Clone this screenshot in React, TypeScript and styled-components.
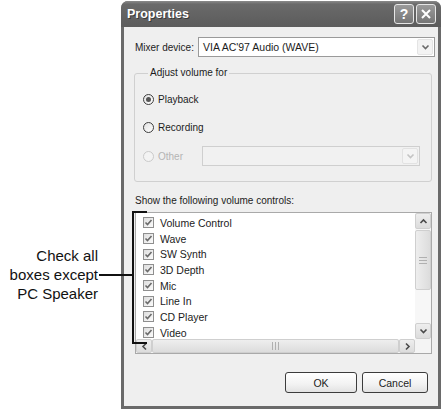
import React from "react";
import styled, { createGlobalStyle, css } from "styled-components";

const GlobalStyle = createGlobalStyle`
  html, body { margin: 0; padding: 0; background: #ffffff; }
  body { font-family: "Liberation Sans", Arial, sans-serif; }
  * { box-sizing: border-box; }
`;

const Page = styled.div`
  position: relative;
  width: 442px;
  height: 411px;
  display: flex;
  align-items: flex-start;
  overflow: hidden;
`;

const Callout = styled.div`
  width: 121px;
  flex: none;
  margin-top: 246px;
  padding-right: 23px;
  text-align: right;
  font-size: 15px;
  line-height: 19px;
  color: #111;
`;

const Leader = styled.div`
  position: absolute;
  left: 99px;
  top: 274px;
  width: 35px;
  height: 2px;
  background: #111;
`;

const Bracket = styled.div`
  position: absolute;
  left: 132px;
  top: 211px;
  width: 15px;
  height: 133px;
  border: 2px solid #111;
  border-right: none;
`;

const Window = styled.div`
  width: 320px;
  height: 408px;
  margin-top: 1px;
  flex: none;
  display: flex;
  flex-direction: column;
  background: #6a6a6a;
  border-radius: 7px 7px 0 0;
  padding: 0 3px 3px;
`;

const TitleBar = styled.div`
  height: 26px;
  display: flex;
  align-items: center;
  background: linear-gradient(#8a8a8a 0%, #6a6a6a 12%, #626262 60%, #5c5c5c 100%);
  margin: 0 -3px;
  padding-left: 6px;
  padding-right: 5px;
  border-radius: 7px 7px 0 0;
`;

const Title = styled.div`
  flex: 1;
  color: #fff;
  font-weight: bold;
  font-size: 12.5px;
  text-shadow: 1px 1px 0 #3a3a3a;
`;

const TitleButtons = styled.div`
  display: flex;
  gap: 2px;
`;

const CaptionButton = styled.div`
  width: 20px;
  height: 20px;
  border: 1px solid #e6e6e6;
  border-radius: 3px;
  background: linear-gradient(#9a9a9a, #767676);
  display: flex;
  align-items: center;
  justify-content: center;
  color: #fff;
  font-weight: bold;
  font-size: 14px;
`;

const Body = styled.div`
  flex: 1;
  background: #efefef;
  padding: 10px 6px 0 11px;
  display: flex;
  flex-direction: column;
  font-size: 10px;
  color: #1c1c1c;
`;

const MixerRow = styled.div`
  display: flex;
  align-items: center;
  height: 20px;
`;

const FieldLabel = styled.div<{ $w: number; $disabled?: boolean }>`
  width: ${(p) => p.$w}px;
  flex: none;
  color: ${(p) => (p.$disabled ? "#b4b4b4" : "#1c1c1c")};
`;

const Combo = styled.div<{ $disabled?: boolean; $w?: number }>`
  height: 20px;
  ${(p) => (p.$w ? css`width: ${p.$w}px;` : css`flex: 1; margin-right: -3px;`)}
  border: 1px solid ${(p) => (p.$disabled ? "#cfcfcf" : "#9a9a9a")};
  background: ${(p) => (p.$disabled ? "#f1f1f1" : "#ffffff")};
  display: flex;
  align-items: center;
  padding-left: 4px;
  padding-right: 1px;
`;

const ComboText = styled.div`
  flex: 1;
  font-size: 10.5px;
  color: #1c1c1c;
`;

const DropButton = styled.div<{ $disabled?: boolean }>`
  width: 16px;
  height: 16px;
  border: 1px solid ${(p) => (p.$disabled ? "#e2e2e2" : "#e4e4e4")};
  border-radius: 2px;
  background: ${(p) => (p.$disabled ? "#f4f4f4" : "#f3f3f3")};
  display: flex;
  align-items: center;
  justify-content: center;
`;

const GroupBox = styled.fieldset`
  margin: 10px 0 0 -1px;
  padding: 0 0 15px 8px;
  border: 1px solid #d0d0d0;
  border-radius: 3px;
  min-width: 0;
`;

const Legend = styled.legend`
  margin-left: 5px;
  padding: 0 2px;
  font-size: 10px;
  line-height: 12px;
  color: #1c1c1c;
`;

const RadioRow = styled.div<{ $mt: number }>`
  display: flex;
  align-items: center;
  height: 20px;
  margin-top: ${(p) => p.$mt}px;
  gap: 4px;
`;

const Radio = styled.div<{ $checked?: boolean; $disabled?: boolean }>`
  width: 11px;
  height: 11px;
  border-radius: 50%;
  border: 1px solid ${(p) => (p.$disabled ? "#cacaca" : "#3e3e3e")};
  background: ${(p) => (p.$disabled ? "#f3f3f3" : "linear-gradient(135deg, #e0e0e0, #ffffff)")};
  display: flex;
  align-items: center;
  justify-content: center;
  flex: none;
  &::after {
    content: "";
    display: ${(p) => (p.$checked ? "block" : "none")};
    width: 5px;
    height: 5px;
    border-radius: 50%;
    background: #555;
  }
`;

const SectionLabel = styled.div`
  margin-top: 13px;
  line-height: 12px;
`;

const ListBox = styled.div`
  margin-top: 5px;
  height: 142px;
  border: 1px solid #a9a9a9;
  background: #fff;
  display: grid;
  grid-template-columns: minmax(0, 1fr) 16px;
  grid-template-rows: minmax(0, 1fr) 14px;
`;

const Items = styled.div`
  padding-top: 2px;
  min-height: 0;
`;

const Item = styled.div`
  height: 15.7px;
  display: flex;
  align-items: center;
  padding-left: 7px;
  gap: 6px;
  font-size: 10.5px;
`;

const CheckBox = styled.div`
  width: 11px;
  height: 11px;
  border: 1px solid #8f8f8f;
  background: linear-gradient(135deg, #dedede, #fbfbfb);
  display: flex;
  align-items: center;
  justify-content: center;
  flex: none;
`;

const VScroll = styled.div`
  display: flex;
  flex-direction: column;
  background: #f7f7f7;
`;

const HScroll = styled.div`
  display: flex;
  background: #f7f7f7;
  position: relative;
`;

const Corner = styled.div`
  background: #f4f4f4;
`;

const ScrollPiece = styled.div<{ $grow?: boolean; $h?: number; $w?: number; $vertical?: boolean }>`
  ${(p) => (p.$grow ? css`flex: 1;` : css`width: ${p.$w ?? 16}px; height: ${p.$h ?? 16}px; flex: none;`)}
  border: 1px solid #cfcfcf;
  border-radius: 2px;
  background: ${(p) =>
    p.$vertical ? "linear-gradient(90deg, #eeeeee, #dcdcdc)" : "linear-gradient(#eeeeee, #dcdcdc)"};
  display: flex;
  align-items: center;
  justify-content: center;
`;

const Spacer = styled.div`
  flex: 1;
`;

const Gap = styled.div<{ $s: number }>`
  flex: none;
  width: ${(p) => p.$s}px;
  height: ${(p) => p.$s}px;
`;

const ButtonRow = styled.div`
  margin-top: 18px;
  display: flex;
  justify-content: flex-end;
  gap: 5px;
  padding-right: 4px;
`;

const PushButton = styled.div<{ $w: number }>`
  width: ${(p) => p.$w}px;
  height: 21px;
  border: 1px solid #3c3c3c;
  border-radius: 3px;
  background: linear-gradient(#ffffff, #f2f2f2 60%, #e2e2e2);
  display: flex;
  align-items: center;
  justify-content: center;
  font-size: 10.5px;
  color: #1c1c1c;
`;

const Chevron = ({ dir, color = "#4a4a4a" }: { dir: "up" | "down" | "left" | "right"; color?: string }) => {
  const pts: Record<string, string> = {
    down: "1.5,2.5 4.5,5.5 7.5,2.5",
    up: "1.5,6 4.5,3 7.5,6",
    left: "6,1.5 3,4.5 6,7.5",
    right: "3,1.5 6,4.5 3,7.5",
  };
  return (
    <svg width="9" height="9" viewBox="0 0 9 9">
      <polyline points={pts[dir]} fill="none" stroke={color} strokeWidth="1.6" />
    </svg>
  );
};

const Grip = ({ vertical }: { vertical?: boolean }) =>
  vertical ? (
    <svg width="8" height="7" viewBox="0 0 8 7">
      <path d="M0 0.5H8M0 3.5H8M0 6.5H8" stroke="#b0b0b0" strokeWidth="1" />
    </svg>
  ) : (
    <svg width="7" height="8" viewBox="0 0 7 8">
      <path d="M0.5 0V8M3.5 0V8M6.5 0V8" stroke="#b0b0b0" strokeWidth="1" />
    </svg>
  );

const Check = () => (
  <svg width="9" height="9" viewBox="0 0 9 9">
    <polyline points="1.5,4.5 3.5,6.5 7.5,2" fill="none" stroke="#6a6a6a" strokeWidth="1.6" />
  </svg>
);

const controls = ["Volume Control", "Wave", "SW Synth", "3D Depth", "Mic", "Line In", "CD Player", "Video"];

export default function App() {
  return (
    <>
      <GlobalStyle />
      <Page>
        <Callout>
          Check all
          <br />
          boxes except
          <br />
          PC Speaker
        </Callout>
        <Window>
          <TitleBar>
            <Title>Properties</Title>
            <TitleButtons>
              <CaptionButton>?</CaptionButton>
              <CaptionButton>
                <svg width="12" height="12" viewBox="0 0 12 12">
                  <path d="M2 2L10 10M10 2L2 10" stroke="#fff" strokeWidth="2" />
                </svg>
              </CaptionButton>
            </TitleButtons>
          </TitleBar>
          <Body>
            <MixerRow>
              <FieldLabel $w={63}>Mixer device:</FieldLabel>
              <Combo>
                <ComboText>VIA AC'97 Audio (WAVE)</ComboText>
                <DropButton>
                  <Chevron dir="down" color="#6a6a6a" />
                </DropButton>
              </Combo>
            </MixerRow>
            <GroupBox>
              <Legend>Adjust volume for</Legend>
              <RadioRow $mt={10}>
                <Radio $checked />
                <span>Playback</span>
              </RadioRow>
              <RadioRow $mt={8}>
                <Radio />
                <span>Recording</span>
              </RadioRow>
              <RadioRow $mt={9}>
                <Radio $disabled />
                <FieldLabel $w={40} $disabled>
                  Other
                </FieldLabel>
                <Combo $disabled $w={218}>
                  <ComboText />
                  <DropButton $disabled>
                    <Chevron dir="down" color="#c4c4c4" />
                  </DropButton>
                </Combo>
              </RadioRow>
            </GroupBox>
            <SectionLabel>Show the following volume controls:</SectionLabel>
            <ListBox>
              <Items>
                {controls.map((c) => (
                  <Item key={c}>
                    <CheckBox>
                      <Check />
                    </CheckBox>
                    <span>{c}</span>
                  </Item>
                ))}
              </Items>
              <VScroll>
                <ScrollPiece>
                  <Chevron dir="up" />
                </ScrollPiece>
                <Gap $s={1} />
                <ScrollPiece $h={60} $vertical>
                  <Grip vertical />
                </ScrollPiece>
                <Spacer />
                <ScrollPiece>
                  <Chevron dir="down" />
                </ScrollPiece>
              </VScroll>
              <HScroll>
                <ScrollPiece $h={14}>
                  <Chevron dir="left" />
                </ScrollPiece>
                <ScrollPiece $grow>
                  <Grip />
                </ScrollPiece>
                <ScrollPiece $h={14}>
                  <Chevron dir="right" />
                </ScrollPiece>
              </HScroll>
              <Corner />
            </ListBox>
            <ButtonRow>
              <PushButton $w={72}>OK</PushButton>
              <PushButton $w={66}>Cancel</PushButton>
            </ButtonRow>
          </Body>
        </Window>
        <Leader />
        <Bracket />
      </Page>
    </>
  );
}
